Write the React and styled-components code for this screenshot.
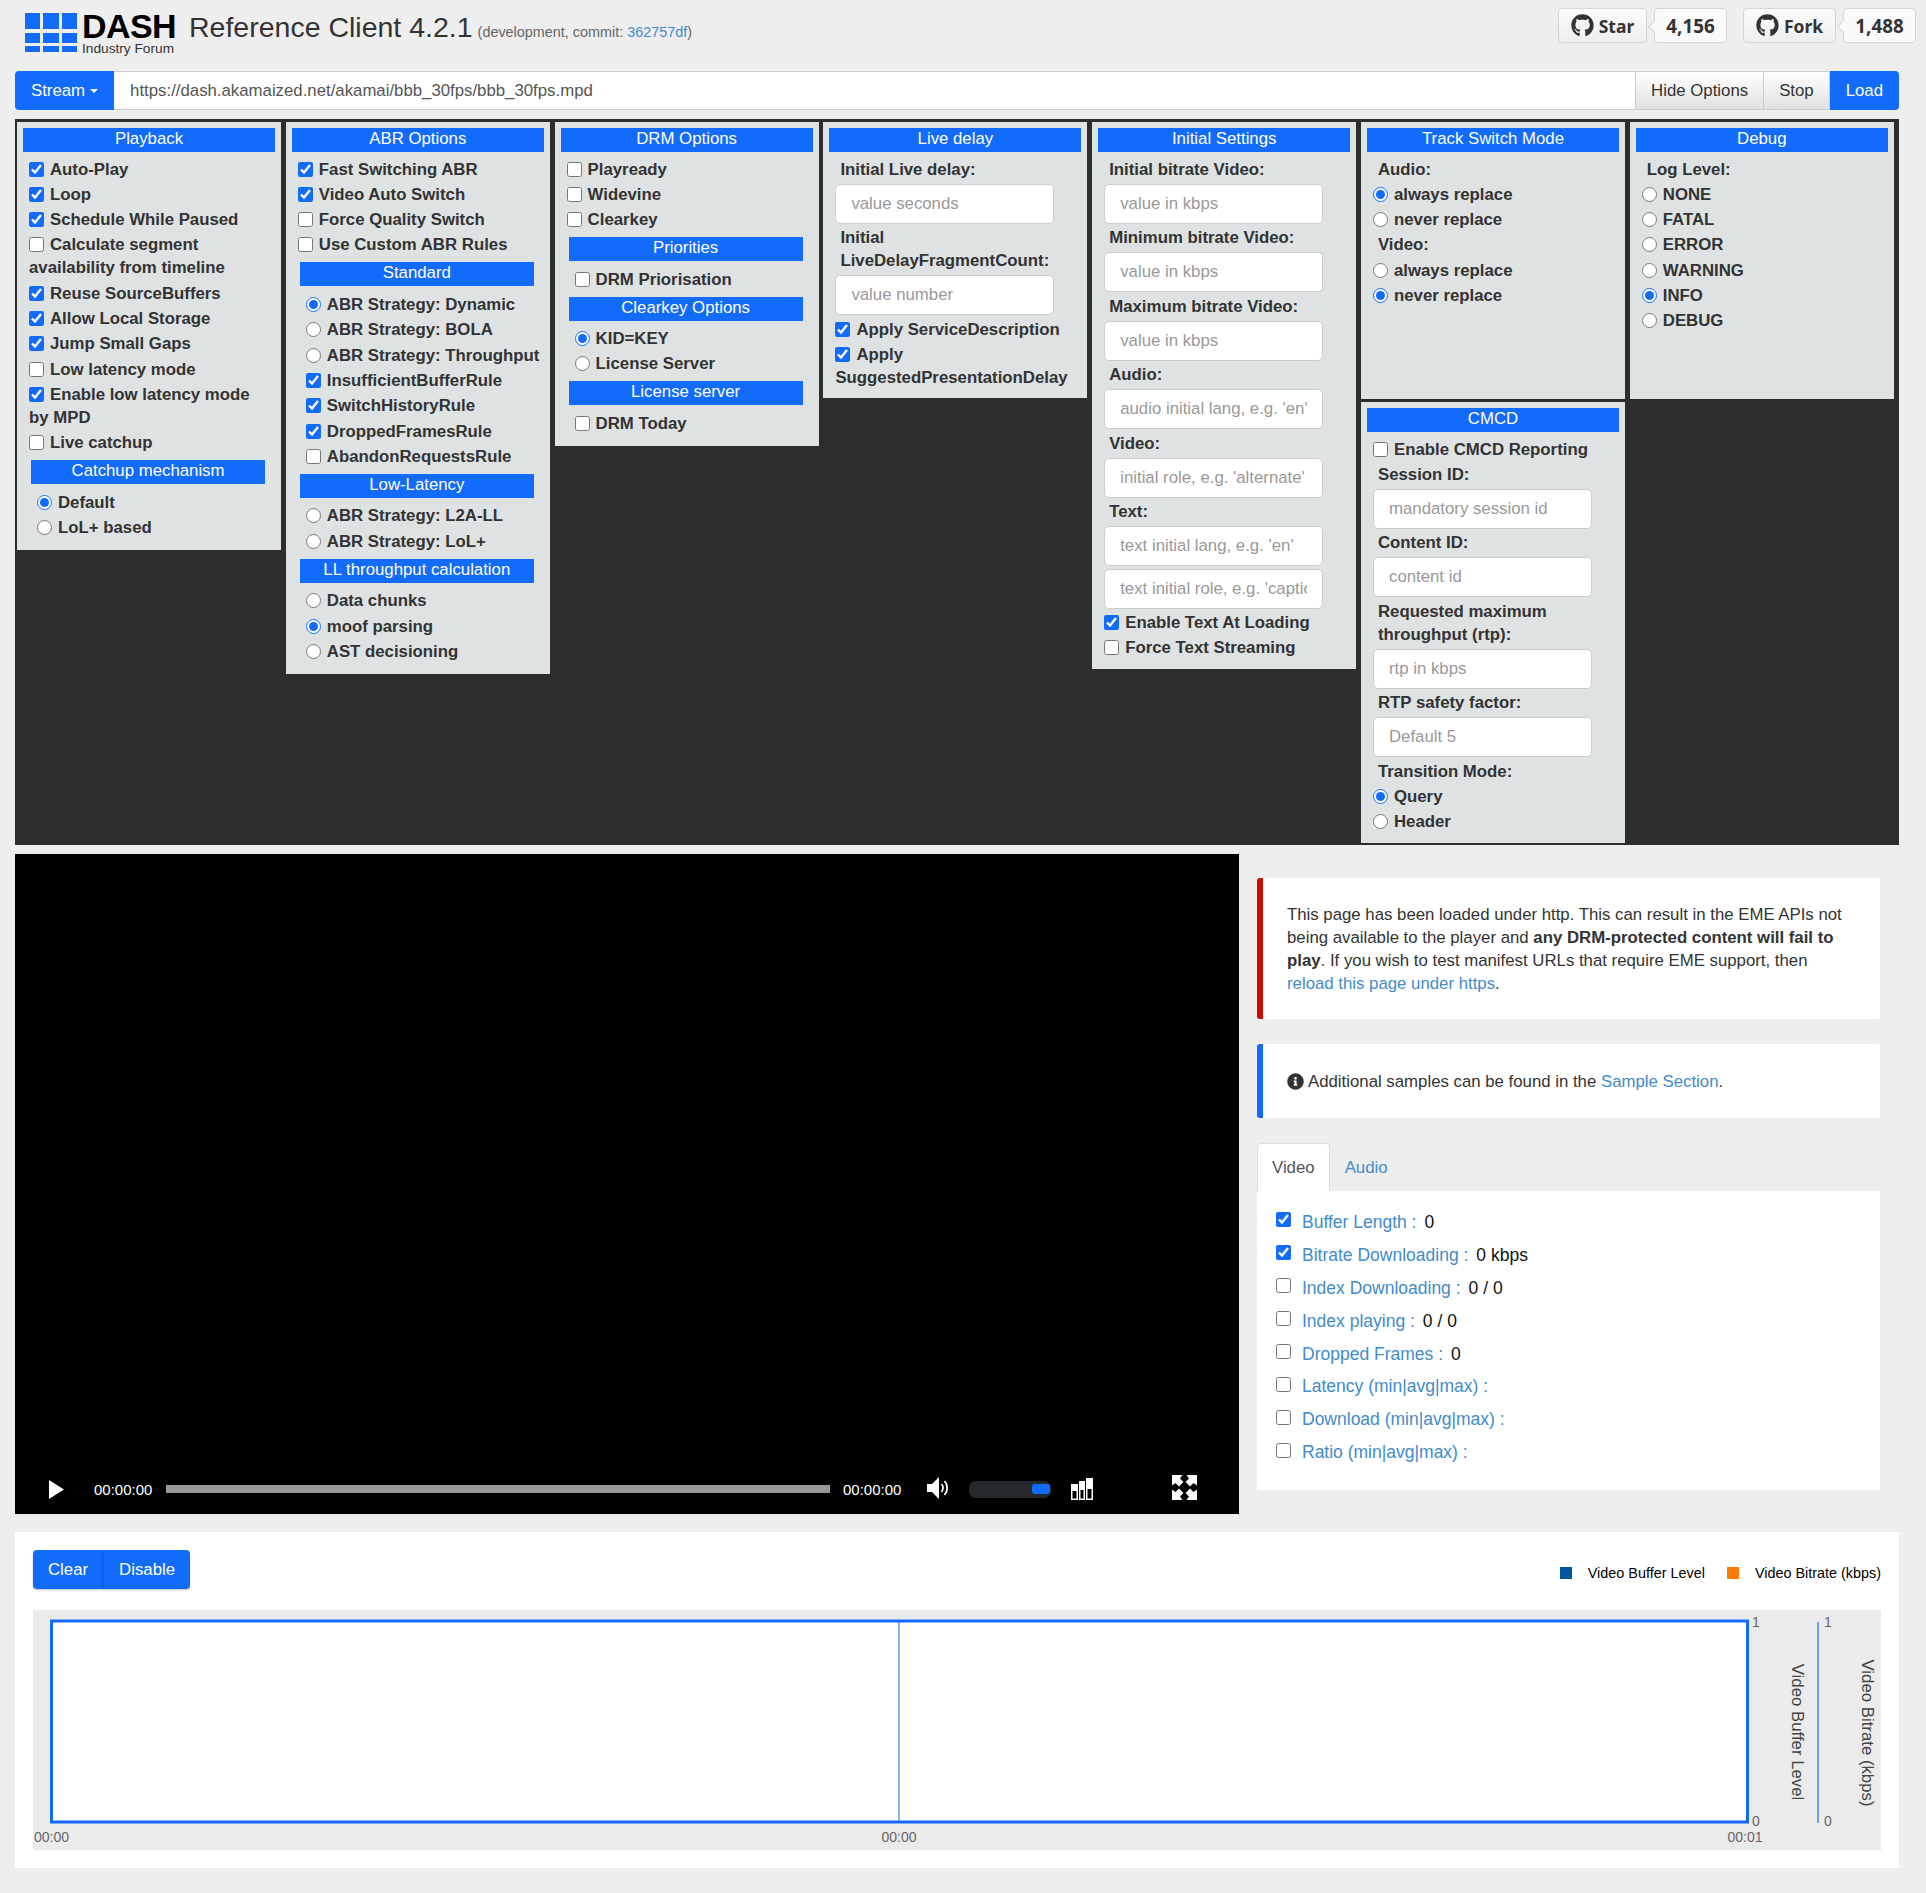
import React from 'react';
import styled, { createGlobalStyle } from 'styled-components';
import { FaGithub, FaInfoCircle } from 'react-icons/fa';

const BLUE = '#136bfb';
const LINK = '#428bca';

const GlobalStyle = createGlobalStyle`
  body {
    margin: 0;
    background: #eeeeee;
    color: #333;
    font-family: "Liberation Sans", Arial, sans-serif;
    font-size: 16.8px;
  }
  * { box-sizing: border-box; }
`;

const Page = styled.div`
  width: 1926px;
  height: 1893px;
  padding: 0 27px 0 15px;
  overflow: hidden;
`;

const Header = styled.header`
  display: flex;
  height: 71px;
  margin-right: -17px;
`;

const Logo = styled.div`
  display: flex;
  margin: 13px 0 0 10px;
  gap: 5px;
`;

const LogoText = styled.div`
  display: flex;
  flex-direction: column;
  width: 94px;
  color: #000;
`;

const LogoDash = styled.span`
  font-size: 34px;
  line-height: 26px;
  height: 29px;
  font-weight: 700;
  letter-spacing: -0.6px;
`;

const LogoForum = styled.span`
  font-size: 13.7px;
  line-height: 13px;
  color: #333;
`;

const Title = styled.div`
  margin: 9px 0 0 13px;
  font-size: 28.5px;
  line-height: 36px;
  color: #333;
`;

const Commit = styled.small`
  font-size: 14.4px;
  color: #666;
  margin-left: 5px;
`;

const Link = styled.a`
  color: ${LINK};
  text-decoration: none;
`;

const Social = styled.div`
  display: flex;
  margin: 8px 0 0 auto;
`;

const SocialButton = styled.div`
  display: flex;
  align-items: center;
  justify-content: center;
  gap: 5px;
  width: ${p => p.$width}px;
  height: 35px;
  border: 1px solid #d5d5d5;
  border-radius: 4px;
  background: linear-gradient(#fcfcfc, #eeeeee);
  font-family: "Noto Sans", sans-serif;
  font-size: 17.5px;
  font-weight: 700;
  color: #333;
  svg { font-size: 23px; }
`;

const SocialCount = styled.div`
  position: relative;
  display: flex;
  align-items: center;
  justify-content: center;
  width: ${p => p.$width}px;
  height: 35px;
  margin: 0 16px 0 7px;
  border: 1px solid #d5d5d5;
  border-radius: 4px;
  background: #fafafa;
  font-family: "Noto Sans", sans-serif;
  font-size: 18.8px;
  font-weight: 700;
  color: #333;
  &:last-child { margin-right: 0; }
  &::before {
    content: '';
    position: absolute;
    left: -5px;
    top: 13px;
    width: 8px;
    height: 8px;
    background: #fafafa;
    border-left: 1px solid #d5d5d5;
    border-bottom: 1px solid #d5d5d5;
    transform: rotate(45deg);
  }
`;

const UrlBar = styled.div`
  display: flex;
  height: 39px;
`;

const BlueButton = styled.button`
  height: 39px;
  padding: 0 16px;
  border: none;
  background: ${BLUE};
  color: #fff;
  font: inherit;
  border-radius: ${p => p.$radius || '0'};
`;

const PairButton = styled(BlueButton)`
  padding: 0 15px;
  box-shadow: 0 1px 2px rgba(0, 0, 0, 0.25);
  & + & { border-left: 1px solid #0f5fe0; }
`;

const Caret = styled.span`
  display: inline-block;
  margin-left: 5px;
  vertical-align: middle;
  border-top: 4px solid #fff;
  border-left: 4px solid transparent;
  border-right: 4px solid transparent;
`;

const UrlInput = styled.input`
  flex: 1;
  min-width: 0;
  padding: 0 16px;
  border: 1px solid #ccc;
  border-left: none;
  background: #fff;
  color: #555;
  font: inherit;
`;

const GrayButton = styled.button`
  height: 39px;
  padding: 0 15px;
  border: 1px solid #ccc;
  border-left: none;
  background: linear-gradient(#fff, #e0e0e0);
  color: #333;
  font: inherit;
`;

const OptionsPanel = styled.section`
  display: grid;
  grid-template-columns: repeat(7, 264px);
  column-gap: 4.8px;
  align-items: start;
  height: 726px;
  margin-top: 9px;
  padding: 3px 2px;
  background: #2d2d2d;
`;

const Column = styled.div`
  display: flex;
  flex-direction: column;
  gap: 3px;
`;

const Card = styled.div`
  min-height: ${p => p.$minHeight || 0}px;
  padding: 6px 12px 7px;
  background: #dee2e3;
`;

const CardTitle = styled.div`
  height: 24px;
  margin: 0 -6px 5.5px;
  background: ${BLUE};
  color: #fff;
  line-height: 21px;
  text-align: center;
`;

const Group = styled.div`
  margin: 6px 4px 2px 2px;
  &:last-child { margin-bottom: 4px; }
`;

const GroupTitle = styled(CardTitle)`
  margin: 0 0 6.5px;
`;

const GroupRows = styled.div`
  padding-left: 6px;
  white-space: nowrap;
`;

const Row = styled.label`
  display: block;
  margin-bottom: 2.33px;
  line-height: 23px;
  font-weight: 700;
  color: #333;
`;

const Box = styled.input`
  width: 15px;
  height: 15px;
  margin: 0 6px 0 0;
  vertical-align: -2px;
  accent-color: ${BLUE};
`;

const Caption = styled.div`
  margin: 0 0 2.33px 5px;
  line-height: 23px;
  font-weight: 700;
  color: #333;
`;

const FieldLabel = styled(Caption)`
  margin-bottom: 3px;
`;

const TextField = styled.input`
  display: block;
  width: 219px;
  height: 40px;
  margin-bottom: 2.5px;
  padding: 0 15px;
  border: 1px solid #ccc;
  border-radius: 5px;
  background: #fff;
  color: #555;
  font: inherit;
  &::placeholder { color: #999; opacity: 1; }
`;

const PlayerRow = styled.section`
  display: flex;
  margin-top: 9px;
`;

const Player = styled.div`
  display: flex;
  align-items: flex-end;
  flex: none;
  width: 1224px;
  height: 660px;
  background: #000;
`;

const Controls = styled.div`
  display: flex;
  align-items: center;
  width: 100%;
  height: 25px;
  margin-bottom: 14px;
  color: #fff;
  font-size: 15px;
`;

const PlayIcon = styled.svg`
  flex: none;
  margin-left: 34px;
  margin-top: 4px;
`;

const Time = styled.span`
  flex: none;
  width: 58px;
  margin-left: ${p => p.$left}px;
  margin-top: 3px;
`;

const SeekBar = styled.div`
  flex: none;
  width: 664px;
  height: 8px;
  margin: 3px 0 0 14px;
  background: #999;
`;

const ControlIcon = styled.svg`
  flex: none;
  display: block;
  margin-left: ${p => p.$left}px;
  margin-top: ${p => p.$top || 0}px;
`;

const VolumeTrack = styled.div`
  display: flex;
  align-items: center;
  justify-content: flex-end;
  flex: none;
  width: 82px;
  height: 17px;
  margin: 3px 0 0 20px;
  padding-right: 1px;
  border-radius: 7px;
  background: #25282c;
`;

const VolumeThumb = styled.div`
  width: 18px;
  height: 10px;
  border-radius: 3px;
  background: ${BLUE};
`;

const SidePanel = styled.div`
  flex: none;
  width: 623px;
  margin: 24px 0 0 18px;
`;

const Alert = styled.div`
  display: ${p => (p.$inline ? 'flex' : 'block')};
  align-items: center;
  gap: 4px;
  margin-bottom: 25px;
  padding: ${p => p.$pad}px 30px ${p => p.$pad}px 24px;
  border-left: 6px solid ${p => p.$color};
  border-radius: 3px;
  background: #fff;
  line-height: 23px;
  color: #333;
  svg { font-size: 17px; flex: none; }
`;

const Tabs = styled.div`
  display: flex;
  height: 48px;
`;

const Tab = styled.div`
  padding: 0 14px;
  line-height: 47px;
  color: ${p => (p.$active ? '#555' : LINK)};
  background: ${p => (p.$active ? '#fff' : 'transparent')};
  border: 1px solid ${p => (p.$active ? '#ddd' : 'transparent')};
  border-bottom: none;
  border-radius: 4px 4px 0 0;
`;

const Metrics = styled.div`
  height: 299px;
  padding: 14.5px 19px;
  background: #fff;
  font-size: 17.5px;
`;

const MetricRow = styled.div`
  display: flex;
  align-items: center;
  height: 32.9px;
  padding-top: 1px;
`;

const MetricBox = styled(Box)`
  margin: -5px 11px 0 0;
`;

const MetricName = styled.span`
  color: ${LINK};
  margin-right: 8px;
`;

const MetricValue = styled.span`
  color: #111;
`;

const ChartCard = styled.section`
  height: 336px;
  margin-top: 18px;
  padding: 18px;
  background: #fff;
`;

const ChartTop = styled.div`
  display: flex;
  justify-content: space-between;
  height: 60px;
`;

const ButtonPair = styled.div`
  display: flex;
  height: 39px;
`;

const Legend = styled.div`
  display: flex;
  align-items: center;
  height: 45px;
  font-size: 14.4px;
  color: #000;
`;

const Swatch = styled.span`
  width: 12px;
  height: 12px;
  margin: 0 16px 0 22px;
  background: ${p => p.$color};
`;

const ChartSvg = styled.svg`
  display: block;
  background: #ebebeb;
  text {
    font-family: "Liberation Sans", Arial, sans-serif;
    font-size: 14px;
    fill: #666;
  }
  text.axis-title {
    font-size: 16.8px;
    fill: #444;
  }
`;

const Check = ({ on, children }) => (
  <Row>
    <Box type="checkbox" defaultChecked={on} />
    {children}
  </Row>
);

const Radio = ({ on, name, children }) => (
  <Row>
    <Box type="radio" name={name} defaultChecked={on} />
    {children}
  </Row>
);

const Section = ({ title, children }) => (
  <Group>
    <GroupTitle>{title}</GroupTitle>
    <GroupRows>{children}</GroupRows>
  </Group>
);

const Field = ({ placeholder }) => <TextField type="text" placeholder={placeholder} />;

const LogoMark = () => (
  <svg width="52" height="39" viewBox="0 0 52 39" fill="#136bfb">
    <rect x="0" y="0" width="15" height="16" />
    <rect x="18" y="0" width="16" height="16" />
    <rect x="37" y="0" width="15" height="16" />
    <rect x="0" y="20" width="15" height="10" />
    <rect x="18" y="20" width="16" height="10" />
    <rect x="37" y="20" width="15" height="10" />
    <rect x="0" y="33" width="15" height="6" />
    <rect x="18" y="33" width="16" height="6" />
    <rect x="37" y="33" width="15" height="6" />
  </svg>
);

const VolumeIcon = () => (
  <ControlIcon $left={26} width="22" height="22" viewBox="0 0 22 22" fill="none">
    <path d="M0 7h5l7-7v22l-7-7H0z" fill="#fff" />
    <path d="M14.5 7c2 2.2 2 5.8 0 8" stroke="#fff" strokeWidth="1.8" />
    <path d="M17.5 4c3.6 3.8 3.6 10.2 0 14" stroke="#fff" strokeWidth="1.8" />
  </ControlIcon>
);

const BitrateIcon = () => (
  <ControlIcon $left={20} $top={2} width="22" height="22" viewBox="0 0 22 22" fill="#fff">
    <path d="M0 6h7v16H0zM1.5 13v7.5h4V13z" fillRule="evenodd" />
    <path d="M8 3h6v19H8zM9.5 12v8.5h3V12z" fillRule="evenodd" />
    <path d="M15 0h7v22h-7zM16.5 11v9.5h4V11z" fillRule="evenodd" />
  </ControlIcon>
);

const FullscreenIcon = () => (
  <ControlIcon $left={79} width="25" height="25" viewBox="0 0 25 25" fill="#fff">
    <path d="M0 0h10.5L8 3.5l3.5 3.5-4.5 4.5L3.5 8 0 10.5z" />
    <path d="M25 0H14.5L17 3.5 13.500 7l4.500 4.500L21.500 8 25 10.500z" />
    <path d="M0 25V14.500L3.500 17l3.500-3.500 4.500 4.500L8 21.500l2.500 3.500z" />
    <path d="M25 25H14.500l2.500-3.500-3.500-3.500 4.500-4.500 3.500 3.500 3.500-2.500z" />
  </ControlIcon>
);

const metrics = [
  ['Buffer Length :', '0', true],
  ['Bitrate Downloading :', '0 kbps', true],
  ['Index Downloading :', '0 / 0'],
  ['Index playing :', '0 / 0'],
  ['Dropped Frames :', '0'],
  ['Latency (min|avg|max) :', ''],
  ['Download (min|avg|max) :', ''],
  ['Ratio (min|avg|max) :', ''],
];

export default function App() {
  return (
    <Page>
      <GlobalStyle />
      <Header>
        <Logo>
          <LogoMark />
          <LogoText>
            <LogoDash>DASH</LogoDash>
            <LogoForum>Industry Forum</LogoForum>
          </LogoText>
        </Logo>
        <Title>
          Reference Client 4.2.1
          <Commit>
            (development, commit: <Link>362757df</Link>)
          </Commit>
        </Title>
        <Social>
          <SocialButton $width={89}><FaGithub />Star</SocialButton>
          <SocialCount $width={73}>4,156</SocialCount>
          <SocialButton $width={93}><FaGithub />Fork</SocialButton>
          <SocialCount $width={73}>1,488</SocialCount>
        </Social>
      </Header>

      <UrlBar>
        <BlueButton $radius="4px 0 0 4px">Stream<Caret /></BlueButton>
        <UrlInput type="text" defaultValue="https://dash.akamaized.net/akamai/bbb_30fps/bbb_30fps.mpd" />
        <GrayButton>Hide Options</GrayButton>
        <GrayButton>Stop</GrayButton>
        <BlueButton $radius="0 4px 4px 0">Load</BlueButton>
      </UrlBar>

      <OptionsPanel>
        <Column>
          <Card>
            <CardTitle>Playback</CardTitle>
            <Check on>Auto-Play</Check>
            <Check on>Loop</Check>
            <Check on>Schedule While Paused</Check>
            <Check>Calculate segment availability from timeline</Check>
            <Check on>Reuse SourceBuffers</Check>
            <Check on>Allow Local Storage</Check>
            <Check on>Jump Small Gaps</Check>
            <Check>Low latency mode</Check>
            <Check on>Enable low latency mode by MPD</Check>
            <Check>Live catchup</Check>
            <Section title="Catchup mechanism">
              <Radio on name="catchup">Default</Radio>
              <Radio name="catchup">LoL+ based</Radio>
            </Section>
          </Card>
        </Column>

        <Column>
          <Card>
            <CardTitle>ABR Options</CardTitle>
            <Check on>Fast Switching ABR</Check>
            <Check on>Video Auto Switch</Check>
            <Check>Force Quality Switch</Check>
            <Check>Use Custom ABR Rules</Check>
            <Section title="Standard">
              <Radio on name="abr">ABR Strategy: Dynamic</Radio>
              <Radio name="abr">ABR Strategy: BOLA</Radio>
              <Radio name="abr">ABR Strategy: Throughput</Radio>
              <Check on>InsufficientBufferRule</Check>
              <Check on>SwitchHistoryRule</Check>
              <Check on>DroppedFramesRule</Check>
              <Check>AbandonRequestsRule</Check>
            </Section>
            <Section title="Low-Latency">
              <Radio name="abr">ABR Strategy: L2A-LL</Radio>
              <Radio name="abr">ABR Strategy: LoL+</Radio>
            </Section>
            <Section title="LL throughput calculation">
              <Radio name="ll">Data chunks</Radio>
              <Radio on name="ll">moof parsing</Radio>
              <Radio name="ll">AST decisioning</Radio>
            </Section>
          </Card>
        </Column>

        <Column>
          <Card>
            <CardTitle>DRM Options</CardTitle>
            <Check>Playready</Check>
            <Check>Widevine</Check>
            <Check>Clearkey</Check>
            <Section title="Priorities">
              <Check>DRM Priorisation</Check>
            </Section>
            <Section title="Clearkey Options">
              <Radio on name="clearkey">KID=KEY</Radio>
              <Radio name="clearkey">License Server</Radio>
            </Section>
            <Section title="License server">
              <Check>DRM Today</Check>
            </Section>
          </Card>
        </Column>

        <Column>
          <Card>
            <CardTitle>Live delay</CardTitle>
            <FieldLabel>Initial Live delay:</FieldLabel>
            <Field placeholder="value seconds" />
            <FieldLabel>Initial LiveDelayFragmentCount:</FieldLabel>
            <Field placeholder="value number" />
            <Check on>Apply ServiceDescription</Check>
            <Check on>Apply SuggestedPresentationDelay</Check>
          </Card>
        </Column>

        <Column>
          <Card>
            <CardTitle>Initial Settings</CardTitle>
            <FieldLabel>Initial bitrate Video:</FieldLabel>
            <Field placeholder="value in kbps" />
            <FieldLabel>Minimum bitrate Video:</FieldLabel>
            <Field placeholder="value in kbps" />
            <FieldLabel>Maximum bitrate Video:</FieldLabel>
            <Field placeholder="value in kbps" />
            <FieldLabel>Audio:</FieldLabel>
            <Field placeholder="audio initial lang, e.g. 'en'" />
            <FieldLabel>Video:</FieldLabel>
            <Field placeholder="initial role, e.g. 'alternate'" />
            <FieldLabel>Text:</FieldLabel>
            <Field placeholder="text initial lang, e.g. 'en'" />
            <Field placeholder="text initial role, e.g. 'caption'" />
            <Check on>Enable Text At Loading</Check>
            <Check>Force Text Streaming</Check>
          </Card>
        </Column>

        <Column>
          <Card $minHeight={277}>
            <CardTitle>Track Switch Mode</CardTitle>
            <Caption>Audio:</Caption>
            <Radio on name="trackAudio">always replace</Radio>
            <Radio name="trackAudio">never replace</Radio>
            <Caption>Video:</Caption>
            <Radio name="trackVideo">always replace</Radio>
            <Radio on name="trackVideo">never replace</Radio>
          </Card>
          <Card>
            <CardTitle>CMCD</CardTitle>
            <Check>Enable CMCD Reporting</Check>
            <FieldLabel>Session ID:</FieldLabel>
            <Field placeholder="mandatory session id" />
            <FieldLabel>Content ID:</FieldLabel>
            <Field placeholder="content id" />
            <FieldLabel>Requested maximum throughput (rtp):</FieldLabel>
            <Field placeholder="rtp in kbps" />
            <FieldLabel>RTP safety factor:</FieldLabel>
            <Field placeholder="Default 5" />
            <Caption>Transition Mode:</Caption>
            <Radio on name="cmcd">Query</Radio>
            <Radio name="cmcd">Header</Radio>
          </Card>
        </Column>

        <Column>
          <Card $minHeight={277}>
            <CardTitle>Debug</CardTitle>
            <Caption>Log Level:</Caption>
            <Radio name="log">NONE</Radio>
            <Radio name="log">FATAL</Radio>
            <Radio name="log">ERROR</Radio>
            <Radio name="log">WARNING</Radio>
            <Radio on name="log">INFO</Radio>
            <Radio name="log">DEBUG</Radio>
          </Card>
        </Column>
      </OptionsPanel>

      <PlayerRow>
        <Player>
          <Controls>
            <PlayIcon width="15" height="19" viewBox="0 0 15 19" fill="#fff">
              <path d="M0 0l15 9.5L0 19z" />
            </PlayIcon>
            <Time $left={30}>00:00:00</Time>
            <SeekBar />
            <Time $left={13}>00:00:00</Time>
            <VolumeIcon />
            <VolumeTrack><VolumeThumb /></VolumeTrack>
            <BitrateIcon />
            <FullscreenIcon />
          </Controls>
        </Player>

        <SidePanel>
          <Alert $color="#cc0b00" $pad={24.5}>
            This page has been loaded under http. This can result in the EME APIs not being available to the
            player and <b>any DRM-protected content will fail to play</b>. If you wish to test manifest URLs that
            require EME support, then <Link>reload this page under https</Link>.
          </Alert>
          <Alert $color={BLUE} $pad={25.5} $inline>
            <FaInfoCircle />
            <span>Additional samples can be found in the <Link>Sample Section</Link>.</span>
          </Alert>
          <Tabs>
            <Tab $active>Video</Tab>
            <Tab>Audio</Tab>
          </Tabs>
          <Metrics>
            {metrics.map(([name, value, on]) => (
              <MetricRow key={name}>
                <MetricBox type="checkbox" defaultChecked={on} />
                <MetricName>{name}</MetricName>
                <MetricValue>{value}</MetricValue>
              </MetricRow>
            ))}
          </Metrics>
        </SidePanel>
      </PlayerRow>

      <ChartCard>
        <ChartTop>
          <ButtonPair>
            <PairButton $radius="4px 0 0 4px">Clear</PairButton>
            <PairButton $radius="0 4px 4px 0">Disable</PairButton>
          </ButtonPair>
          <Legend>
            <Swatch $color="#00579f" />Video Buffer Level
            <Swatch $color="#ff7a00" />Video Bitrate (kbps)
          </Legend>
        </ChartTop>
        <ChartSvg width="1848" height="240" viewBox="0 0 1848 240">
          <rect x="18.5" y="11" width="1696" height="201" fill="#fff" stroke={BLUE} strokeWidth="3" />
          <line x1="866" y1="11" x2="866" y2="212" stroke={BLUE} strokeWidth="1" />
          <line x1="1785" y1="12" x2="1785" y2="213" stroke="#6a9fff" strokeWidth="2" />
          <text x="1719" y="17">1</text>
          <text x="1719" y="216">0</text>
          <text x="1791" y="17">1</text>
          <text x="1791" y="216">0</text>
          <text x="1" y="232">00:00</text>
          <text x="866" y="232" textAnchor="middle">00:00</text>
          <text x="1712" y="232" textAnchor="middle">00:01</text>
          <text className="axis-title" x="1764" y="122" textAnchor="middle" dominantBaseline="central" transform="rotate(90 1764 122)">Video Buffer Level</text>
          <text className="axis-title" x="1834" y="123" textAnchor="middle" dominantBaseline="central" transform="rotate(90 1834 123)">Video Bitrate (kbps)</text>
        </ChartSvg>
      </ChartCard>
    </Page>
  );
}
